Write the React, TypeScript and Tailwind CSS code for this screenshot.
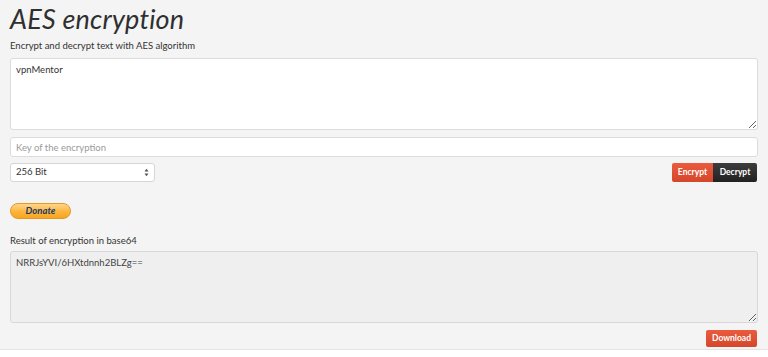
import React from "react";

export default function App() {
  return (
    <div
      className="min-h-screen w-[768px] bg-white text-[#333]"
      style={{ fontFamily: "Lato, 'Noto Sans', sans-serif" }}
    >
      <div className="h-[350px] border-b border-[#e3e3e3] bg-[#f4f4f4] px-[10px]">
        {/* Header */}
        <h1 className="pt-[3px] text-[27px] leading-[32px] font-normal italic tracking-[0.2px] text-[#2f2f2f]">
          AES encryption
        </h1>
        <p className="mt-[4px] text-[9.5px] leading-[14px] text-[#333]">
          Encrypt and decrypt text with AES algorithm
        </p>

        {/* Input text */}
        <textarea
          defaultValue="vpnMentor"
          className="mt-[5px] block h-[72px] w-[748px] rounded-[3px] border border-[#dcdcdc] bg-white px-[5px] pt-[4px] text-[9.5px] leading-[13px] text-[#333] outline-none"
        />

        <input
          placeholder="Key of the encryption"
          className="mt-[7px] block h-[20px] w-[748px] rounded-[3px] border border-[#dcdcdc] bg-white px-[5px] text-[9.5px] text-[#333] outline-none placeholder:text-[#9a9a9a]"
        />

        {/* Key size + actions */}
        <div className="mt-[6px] flex items-center justify-between">
          <div className="flex h-[19px] w-[145px] items-center justify-between rounded-[3px] border border-[#d6d6d6] bg-white px-[5px] text-[9.5px]">
            <span>256 Bit</span>
            <svg width="5" height="9" viewBox="0 0 5 9">
              <path d="M0.5 3.5 L2.5 0.8 L4.5 3.5 Z" fill="#555" />
              <path d="M0.5 5.5 L2.5 8.2 L4.5 5.5 Z" fill="#555" />
            </svg>
          </div>
          <div className="mr-[1px] flex">
            <button className="h-[19px] w-[41px] rounded-l-[2px] bg-gradient-to-b from-[#ea5b3e] to-[#d5472b] text-[8.5px] font-bold text-white">
              Encrypt
            </button>
            <button className="h-[19px] w-[44px] rounded-r-[2px] bg-gradient-to-b from-[#3d3d3d] to-[#222] text-[8.5px] font-bold text-white">
              Decrypt
            </button>
          </div>
        </div>

        {/* Donate */}
        <button className="mt-[21px] flex h-[16px] w-[61px] items-center justify-center rounded-[8px] border border-[#e29a25] bg-gradient-to-b from-[#ffd68a] via-[#fdb740] to-[#f8a41e] text-[9.5px] font-bold italic text-[#173a6a]">
          Donate
        </button>

        {/* Result */}
        <p className="mt-[15px] text-[9.5px] leading-[14px] text-[#333]">
          Result of encryption in base64
        </p>
        <textarea
          readOnly
          defaultValue="NRRJsYVI/6HXtdnnh2BLZg=="
          className="mt-[3px] block h-[72px] w-[748px] rounded-[3px] border border-[#d8d8d8] bg-[#efefef] px-[5px] pt-[4px] text-[9.5px] leading-[13px] text-[#444] outline-none"
        />
        <div className="mt-[7px] flex justify-end">
          <button className="mr-[1px] h-[17px] w-[51px] rounded-[2px] bg-gradient-to-b from-[#ea5b3e] to-[#d5472b] text-[8.5px] font-bold text-white">
            Download
          </button>
        </div>
      </div>
    </div>
  );
}
